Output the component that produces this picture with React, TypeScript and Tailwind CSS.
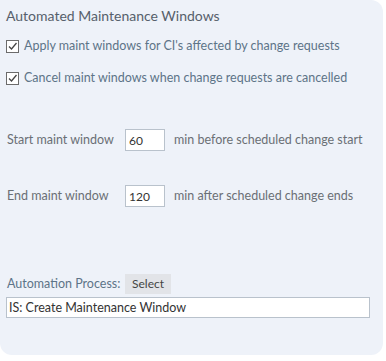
import React from 'react';

const CheckBox = () => (
  <span className="flex h-[13px] w-[13px] shrink-0 items-center justify-center border border-[#6b6b6b] bg-white">
    <svg width="11" height="11" viewBox="0 0 11 11" fill="none">
      <path d="M2 5.5 L4.5 8 L9.5 2" stroke="#444" strokeWidth="1.3" />
    </svg>
  </span>
);

export default function App() {
  return (
    <div className="h-[361px] w-[386px] bg-white font-['Lato',sans-serif]">
      <div className="flex h-[355px] w-[383px] flex-col rounded-tr-[12px] rounded-b-[12px] bg-[#eef2f9] px-[6px]">
        <div className="mt-[6px] text-[14px] leading-[20px] text-[#56606b]">Automated Maintenance Windows</div>

        <label className="mt-[11px] flex h-[18px] items-center gap-[5px] text-[12.5px] text-[#5d7488]">
          <CheckBox />
          Apply maint windows for CI's affected by change requests
        </label>
        <label className="mt-[14px] flex h-[18px] items-center gap-[5px] text-[12.5px] text-[#5d7488]">
          <CheckBox />
          Cancel maint windows when change requests are cancelled
        </label>

        <div className="mt-[42px] flex h-[22px] items-center text-[12.5px] text-[#6a6f75]">
          <span className="w-[119px] pl-[1px]">Start maint window</span>
          <input
            readOnly
            value="60"
            className="h-[22px] w-[40px] border border-[#b9c2cc] bg-white px-[3px] text-[12px] text-[#333] outline-none"
          />
          <span className="ml-[9px]">min before scheduled change start</span>
        </div>

        <div className="mt-[34px] flex h-[22px] items-center text-[12.5px] text-[#6a6f75]">
          <span className="w-[119px] pl-[1px]">End maint window</span>
          <input
            readOnly
            value="120"
            className="h-[22px] w-[40px] border border-[#b9c2cc] bg-white px-[3px] text-[12px] text-[#333] outline-none"
          />
          <span className="ml-[9px]">min after scheduled change ends</span>
        </div>

        <div className="mt-[67px] flex h-[20px] items-center text-[12.5px] text-[#5d7488]">
          <span className="w-[119px] pl-[1px]">Automation Process:</span>
          <button className="h-[20px] bg-[#e2e4e8] px-[7px] text-[12px] text-[#444]">Select</button>
        </div>
        <input
          readOnly
          value="IS: Create Maintenance Window"
          className="mt-[3px] h-[21px] w-[364px] border border-[#b9c2cc] bg-white px-[2px] text-[12.5px] text-[#333] outline-none"
        />
      </div>
    </div>
  );
}
